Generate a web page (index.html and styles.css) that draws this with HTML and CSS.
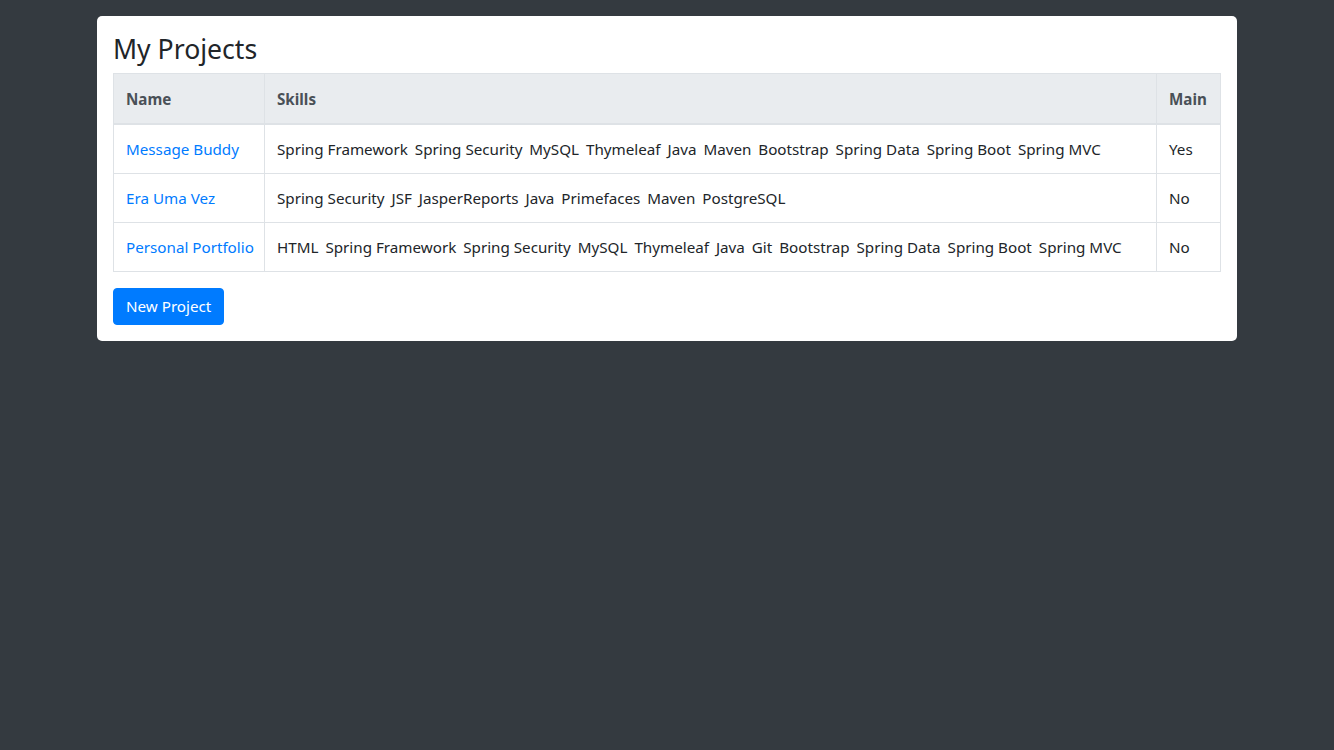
FILE: index.html
```html
<!DOCTYPE html>
<html lang="en">
<head>
<meta charset="utf-8">
<title>My Projects</title>
<link rel="stylesheet" href="styles.css">
</head>
<body>
<main class="container">
  <section class="card">
    <h3 class="card-title">My Projects</h3>
    <table class="table">
      <colgroup>
        <col class="col-name">
        <col class="col-skills">
        <col class="col-main">
      </colgroup>
      <thead>
        <tr><th>Name</th><th>Skills</th><th>Main</th></tr>
      </thead>
      <tbody>
        <tr>
          <td><a href="#">Message Buddy</a></td>
          <td><span class="skill">Spring Framework</span> <span class="skill">Spring Security</span> <span class="skill">MySQL</span> <span class="skill">Thymeleaf</span> <span class="skill">Java</span> <span class="skill">Maven</span> <span class="skill">Bootstrap</span> <span class="skill">Spring Data</span> <span class="skill">Spring Boot</span> <span class="skill">Spring MVC</span></td>
          <td>Yes</td>
        </tr>
        <tr>
          <td><a href="#">Era Uma Vez</a></td>
          <td><span class="skill">Spring Security</span> <span class="skill">JSF</span> <span class="skill">JasperReports</span> <span class="skill">Java</span> <span class="skill">Primefaces</span> <span class="skill">Maven</span> <span class="skill">PostgreSQL</span></td>
          <td>No</td>
        </tr>
        <tr>
          <td><a href="#">Personal Portfolio</a></td>
          <td><span class="skill">HTML</span> <span class="skill">Spring Framework</span> <span class="skill">Spring Security</span> <span class="skill">MySQL</span> <span class="skill">Thymeleaf</span> <span class="skill">Java</span> <span class="skill">Git</span> <span class="skill">Bootstrap</span> <span class="skill">Spring Data</span> <span class="skill">Spring Boot</span> <span class="skill">Spring MVC</span></td>
          <td>No</td>
        </tr>
      </tbody>
    </table>
    <div class="actions">
      <button class="btn-primary" type="button">New Project</button>
    </div>
  </section>
</main>
</body>
</html>
```

FILE: styles.css
```css
* { box-sizing: border-box; }
html, body { margin: 0; padding: 0; }
body {
  background: #343a40;
  font-family: "Noto Sans", "Open Sans", sans-serif;
  font-size: 15.2px;
  line-height: 24px;
  color: #212529;
  min-height: 750px;
}
.container {
  width: 1140px;
  margin: 0 auto;
  padding-top: 16px;
}
.card {
  background: #fff;
  border-radius: 5px;
  padding: 16px;
}
.card-title {
  margin: 0 0 8px 0;
  font-size: 26.6px;
  font-weight: 400;
  line-height: 33px;
  padding-top: 1px;
  height: 33px;
}
.table {
  width: 100%;
  border-collapse: collapse;
  table-layout: fixed;
  margin-bottom: 16px;
  border: 1px solid #dee2e6;
}
.col-name { width: 151px; }
.col-main { width: 64px; }
.table th, .table td {
  padding: 12px;
  text-align: left;
  vertical-align: top;
  border: 1px solid #dee2e6;
  white-space: nowrap;
}
.table thead th {
  background: #e9ecef;
  color: #495057;
  font-weight: 700;
  padding-top: 13px;
  border-bottom: 2px solid #dee2e6;
}
.table a {
  color: #007bff;
  text-decoration: none;
}
.skill { margin-right: 3px; }
.actions { display: flex; }
.btn-primary {
  font: inherit;
  color: #fff;
  background: #007bff;
  border: 1px solid #007bff;
  border-radius: 4px;
  padding: 6px 12px;
  line-height: 23px;
  cursor: pointer;
}
```
